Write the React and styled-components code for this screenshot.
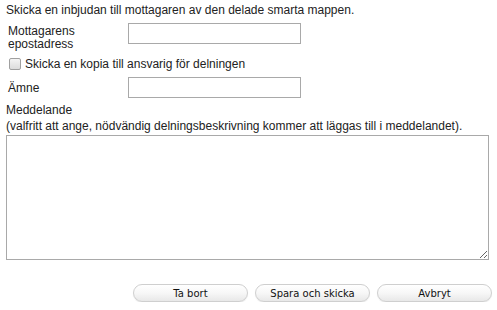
import React, { useState } from 'react';
import styled, { createGlobalStyle } from 'styled-components';

const GlobalStyle = createGlobalStyle`
  body {
    margin: 0;
    background: #ffffff;
    font-family: "Liberation Sans", Arial, sans-serif;
    font-size: 12px;
    color: #222;
  }
`;

const ShareForm = () => {
  const [email, setEmail] = useState('');
  const [subject, setSubject] = useState('');
  const [message, setMessage] = useState('');
  const [copy, setCopy] = useState(false);

  return (
    <Page>
      <GlobalStyle />
      <Intro>Skicka en inbjudan till mottagaren av den delade smarta mappen.</Intro>

      <FieldRow>
        <Label htmlFor="email">Mottagarens<br />epostadress</Label>
        <TextInput id="email" value={email} onChange={(e) => setEmail(e.target.value)} />
      </FieldRow>

      <CheckRow>
        <Check type="checkbox" checked={copy} onChange={(e) => setCopy(e.target.checked)} />
        <span>Skicka en kopia till ansvarig för delningen</span>
      </CheckRow>

      <FieldRow $center>
        <Label htmlFor="subject">Ämne</Label>
        <TextInput id="subject" value={subject} onChange={(e) => setSubject(e.target.value)} />
      </FieldRow>

      <MessageLabel htmlFor="message">
        Meddelande<br />
        (valfritt att ange, nödvändig delningsbeskrivning kommer att läggas till i meddelandet).
      </MessageLabel>
      <MessageBox id="message" value={message} onChange={(e) => setMessage(e.target.value)} />

      <Actions>
        <Button>Ta bort</Button>
        <Button>Spara och skicka</Button>
        <Button>Avbryt</Button>
      </Actions>
    </Page>
  );
};

const Page = styled.div`
  padding: 3px 6px 0 6px;
  width: 497px;
  box-sizing: border-box;
`;

const Intro = styled.p`
  margin: 0;
  line-height: 14px;
`;

const FieldRow = styled.div`
  display: grid;
  grid-template-columns: 122px 173px;
  align-items: ${(p) => (p.$center ? 'center' : 'start')};
  margin-top: 6px;
`;

const Label = styled.label`
  padding-left: 2px;
  padding-top: 2px;
  line-height: 13px;
`;

const TextInput = styled.input`
  box-sizing: border-box;
  width: 173px;
  height: 21px;
  margin: 0;
  border: 1px solid #a9a9a9;
  padding: 1px 3px;
  font: inherit;
  outline: none;
`;

const CheckRow = styled.label`
  display: flex;
  align-items: center;
  gap: 4px;
  margin-top: 6px;
  padding-left: 3px;
  line-height: 14px;
`;

const Check = styled.input`
  appearance: none;
  width: 12px;
  height: 12px;
  margin: 0;
  border: 1px solid #a0a0a0;
  border-radius: 2px;
  background: linear-gradient(#f4f4f4, #dcdcdc);
  box-sizing: border-box;
`;

const MessageLabel = styled.label`
  display: block;
  margin-top: 4px;
  line-height: 16px;
`;

const MessageBox = styled.textarea`
  display: block;
  box-sizing: border-box;
  width: 483px;
  height: 125px;
  margin: 1px 0 0;
  border: 1px solid #a9a9a9;
  font: inherit;
  outline: none;
`;

const Actions = styled.div`
  display: flex;
  justify-content: flex-end;
  gap: 7px;
  margin-top: 24px;
  width: 486px;
`;

const Button = styled.button`
  width: 115px;
  height: 18px;
  padding: 0;
  border: 1px solid #cfcfcf;
  border-radius: 9px;
  background: linear-gradient(#ffffff 0%, #f7f7f7 50%, #e8e8e8 100%);
  box-shadow: 0 1px 1px rgba(0, 0, 0, 0.08);
  font-family: "DejaVu Sans", Verdana, sans-serif;
  font-size: 10px;
  color: #111;
  cursor: pointer;
`;

export default ShareForm;
